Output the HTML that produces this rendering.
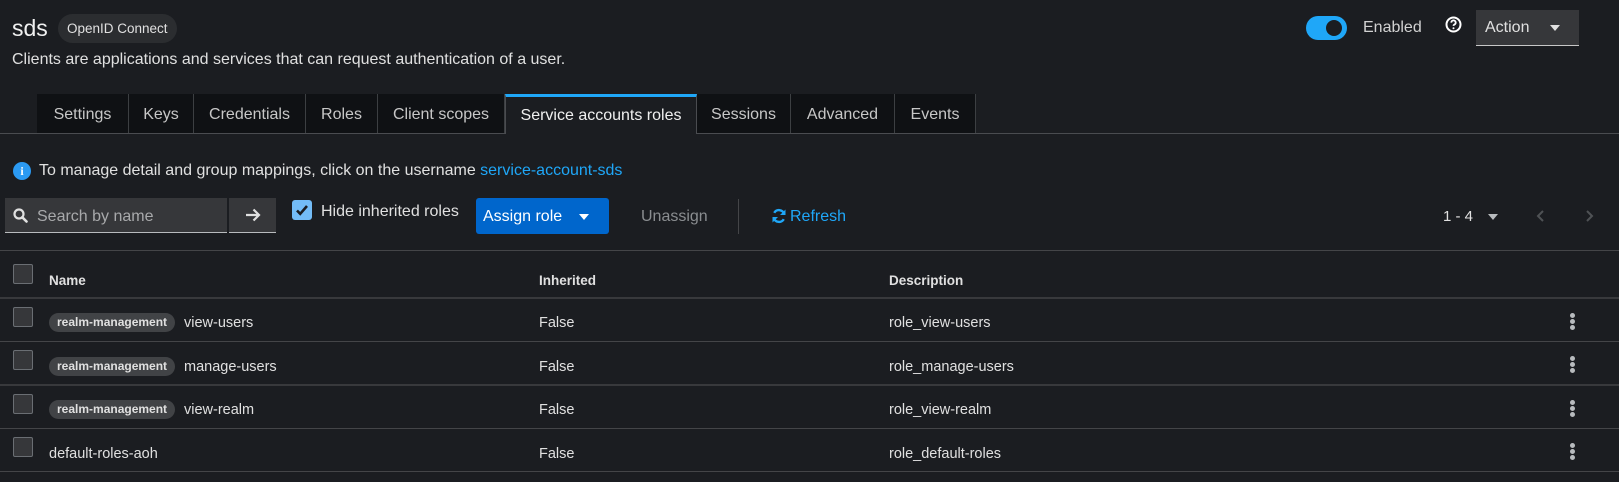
<!DOCTYPE html>
<html><head><meta charset="utf-8"><style>
*{box-sizing:border-box;margin:0;padding:0}
body{width:1619px;height:482px;background:#1b1d21;color:#e0e0e0;font-family:"Liberation Sans",sans-serif;font-size:14.5px;position:relative;overflow:hidden}
.a{position:absolute;white-space:nowrap}
.tab{position:absolute;top:94px;height:39px;background:#0f1114;border-right:1px solid #3c3f42;color:#c7c7c7;font-size:16px;line-height:41px;text-align:center}
.cb{position:absolute;width:20px;height:20px;border:1px solid #6a6e73;border-radius:2px;background:#36373a}
.line{position:absolute;left:0;width:1619px;height:1px;background:#444548}
.badge{position:absolute;background:#414346;border-radius:10px;color:#e0e0e0;font-size:12px;font-weight:bold;height:19px;line-height:19px;padding:0 8px}
.keb{position:absolute;left:1570px;width:6px}
.keb i{display:block;width:5px;height:5px;border-radius:50%;background:#b8bbbe;margin-bottom:1px}
</style></head><body>
<div class="a" style="left:12px;top:15px;font-size:23px;color:#f0f0f0">sds</div>
<div class="a" style="left:58px;top:14px;height:29px;padding:0 9px;border-radius:15px;background:#2b2d30;font-size:13.5px;line-height:30px;color:#e0e0e0">OpenID Connect</div>
<div class="a" style="left:12px;top:51px;font-size:16px;color:#e0e0e0">Clients are applications and services that can request authentication of a user.</div>

<div class="a" style="left:1306px;top:16px;width:41px;height:24px;border-radius:12px;background:#1fa7f8"></div>
<div class="a" style="left:1326px;top:20px;width:16px;height:16px;border-radius:50%;background:#1b1d21"></div>
<div class="a" style="left:1363px;top:19px;font-size:16px;color:#d2d2d2">Enabled</div>
<svg class="a" style="left:1445px;top:16px" width="17" height="17" viewBox="0 0 17 17"><circle cx="8.5" cy="8.5" r="7" fill="none" stroke="#fff" stroke-width="2"/><path d="M6.3 6.6a2.2 2.2 0 1 1 3 2c-.7.3-.8.7-.8 1.3" fill="none" stroke="#fff" stroke-width="1.8"/><circle cx="8.5" cy="12.3" r="1" fill="#fff"/></svg>
<div class="a" style="left:1476px;top:10px;width:103px;height:36px;background:#36373a;border-bottom:1px solid #c7c7c7"></div>
<div class="a" style="left:1485px;top:19px;font-size:16px;color:#e0e0e0">Action</div>
<div class="a" style="left:1550px;top:25px;border:5px solid transparent;border-top:6px solid #e0e0e0"></div>

<div class="line" style="top:133px;background:#4a4c50"></div>
<div class="tab" style="left:37px;width:92px">Settings</div>
<div class="tab" style="left:129px;width:65px">Keys</div>
<div class="tab" style="left:194px;width:112px">Credentials</div>
<div class="tab" style="left:306px;width:72px">Roles</div>
<div class="tab" style="left:378px;width:127px">Client scopes</div>
<div class="tab" style="left:505px;width:192px;background:#1b1d21;border-top:3px solid #1fa7f8;border-left:1px solid #4a4c50;border-right:1px solid #4a4c50;height:40px;line-height:37px;color:#f0f0f0">Service accounts roles</div>
<div class="tab" style="left:697px;width:94px">Sessions</div>
<div class="tab" style="left:791px;width:104px">Advanced</div>
<div class="tab" style="left:895px;width:81px">Events</div>

<div class="a" style="left:13px;top:162px;width:18px;height:18px;border-radius:50%;background:#2b9af3;color:#fff;font-size:12px;font-weight:bold;text-align:center;line-height:18px;font-family:'Liberation Serif',serif">i</div>
<div class="a" style="left:39px;top:162px;font-size:16px;color:#e0e0e0">To manage detail and group mappings, click on the username <span style="color:#1fa7f8">service-account-sds</span></div>

<div class="a" style="left:5px;top:198px;width:222px;height:35px;background:#36373a;border-bottom:1px solid #b8bbbe"></div>
<svg class="a" style="left:13px;top:208px" width="15" height="15" viewBox="0 0 15 15"><circle cx="6" cy="6" r="4.5" fill="none" stroke="#e0e0e0" stroke-width="2.2"/><path d="M9.3 9.3l4.2 4.2" stroke="#e0e0e0" stroke-width="2.6" stroke-linecap="round"/></svg>
<div class="a" style="left:37px;top:208px;font-size:16px;color:#a8a9ab">Search by name</div>
<div class="a" style="left:229px;top:198px;width:47px;height:35px;background:#36373a;border-bottom:1px solid #b8bbbe"></div>
<svg class="a" style="left:245px;top:208px" width="16" height="14" viewBox="0 0 16 14"><path d="M1 7h13M8.5 1.5 14 7l-5.5 5.5" fill="none" stroke="#e0e0e0" stroke-width="2.2"/></svg>
<div class="a" style="left:292px;top:200px;width:20px;height:20px;border-radius:3px;background:#73bcf7"></div>
<svg class="a" style="left:294px;top:202px" width="16" height="16" viewBox="0 0 16 16"><path d="M3 8.5l3.2 3.3L13 4" fill="none" stroke="#1b1d21" stroke-width="2.6"/></svg>
<div class="a" style="left:321px;top:203px;font-size:16px;color:#e0e0e0">Hide inherited roles</div>
<div class="a" style="left:476px;top:198px;width:133px;height:36px;border-radius:3px;background:#0066cc"></div>
<div class="a" style="left:483px;top:208px;font-size:16px;color:#fff">Assign role</div>
<div class="a" style="left:579px;top:214px;border:5px solid transparent;border-top:6px solid #fff"></div>
<div class="a" style="left:641px;top:208px;font-size:16px;color:#8a8d90">Unassign</div>
<div class="a" style="left:738px;top:199px;width:1px;height:35px;background:#444548"></div>
<svg class="a" style="left:771px;top:208px" width="16" height="16" viewBox="0 0 16 16"><path d="M13.2 6A5.5 5.5 0 0 0 3.2 4.8M2.8 10a5.5 5.5 0 0 0 10 1.2" fill="none" stroke="#1fa7f8" stroke-width="2.4"/><path d="M14.5 1.5v5.5H9zM1.5 14.5V9H7z" fill="#1fa7f8"/></svg>
<div class="a" style="left:790px;top:208px;font-size:16px;color:#1fa7f8">Refresh</div>
<div class="a" style="left:1443px;top:208px;font-size:15px;color:#e0e0e0">1 - 4</div>
<div class="a" style="left:1488px;top:214px;border:5px solid transparent;border-top:6px solid #b8bbbe"></div>
<svg class="a" style="left:1536px;top:208px" width="10" height="16" viewBox="0 0 10 16"><path d="M7 3 2 8l5 5" fill="none" stroke="#4f5255" stroke-width="2"/></svg>
<svg class="a" style="left:1584px;top:208px" width="10" height="16" viewBox="0 0 10 16"><path d="M3 3l5 5-5 5" fill="none" stroke="#4f5255" stroke-width="2"/></svg>

<div class="line" style="top:250px"></div>
<div class="cb" style="left:13px;top:264px"></div>
<div class="a" style="left:49px;top:273px;font-size:13.5px;font-weight:bold;color:#e0e0e0">Name</div>
<div class="a" style="left:539px;top:273px;font-size:13.5px;font-weight:bold;color:#e0e0e0">Inherited</div>
<div class="a" style="left:889px;top:273px;font-size:13.5px;font-weight:bold;color:#e0e0e0">Description</div>
<div class="line" style="top:297px;height:2px;background:#38393c"></div>

<div class="cb" style="left:13px;top:307px"></div>
<div class="badge" style="left:49px;top:313px">realm-management</div>
<div class="a" style="left:184px;top:315px;color:#e0e0e0">view-users</div>
<div class="a" style="left:539px;top:315px;color:#e0e0e0">False</div>
<div class="a" style="left:889px;top:315px;color:#e0e0e0">role_view-users</div>
<div class="keb" style="top:313px"><i></i><i></i><i></i></div>
<div class="line" style="top:341px"></div>

<div class="cb" style="left:13px;top:350px"></div>
<div class="badge" style="left:49px;top:357px">realm-management</div>
<div class="a" style="left:184px;top:359px;color:#e0e0e0">manage-users</div>
<div class="a" style="left:539px;top:359px;color:#e0e0e0">False</div>
<div class="a" style="left:889px;top:359px;color:#e0e0e0">role_manage-users</div>
<div class="keb" style="top:356px"><i></i><i></i><i></i></div>
<div class="line" style="top:384px;height:2px;background:#38393c"></div>

<div class="cb" style="left:13px;top:394px"></div>
<div class="badge" style="left:49px;top:400px">realm-management</div>
<div class="a" style="left:184px;top:402px;color:#e0e0e0">view-realm</div>
<div class="a" style="left:539px;top:402px;color:#e0e0e0">False</div>
<div class="a" style="left:889px;top:402px;color:#e0e0e0">role_view-realm</div>
<div class="keb" style="top:400px"><i></i><i></i><i></i></div>
<div class="line" style="top:428px"></div>

<div class="cb" style="left:13px;top:437px"></div>
<div class="a" style="left:49px;top:446px;color:#e0e0e0">default-roles-aoh</div>
<div class="a" style="left:539px;top:446px;color:#e0e0e0">False</div>
<div class="a" style="left:889px;top:446px;color:#e0e0e0">role_default-roles</div>
<div class="keb" style="top:443px"><i></i><i></i><i></i></div>
<div class="line" style="top:471px"></div>
</body></html>
